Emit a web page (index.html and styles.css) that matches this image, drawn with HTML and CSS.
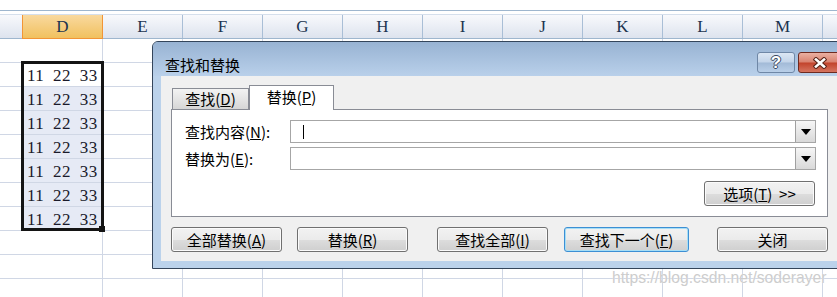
FILE: index.html
```html
<!DOCTYPE html>
<html lang="zh-CN">
<head>
    <meta charset="UTF-8">
    <title>查找和替换</title>
    <link rel="stylesheet" href="styles.css">
</head>
<body>
    <div class="sheet">
        <!-- Край строки формул -->
        <div class="formula-edge"></div>

        <!-- Заголовки столбцов -->
        <div class="colhead">
            <div class="hc corner"></div>
            <div class="hc current">D</div>
            <div class="hc">E</div>
            <div class="hc">F</div>
            <div class="hc">G</div>
            <div class="hc">H</div>
            <div class="hc">I</div>
            <div class="hc">J</div>
            <div class="hc">K</div>
            <div class="hc">L</div>
            <div class="hc">M</div>
            <div class="hc"></div>
        </div>

        <!-- Сетка ячеек -->
        <div class="grid">
            <div class="col-d">
                <div class="cell"></div>
                <div class="cell">11 22 33</div>
                <div class="cell picked">11 22 33</div>
                <div class="cell picked">11 22 33</div>
                <div class="cell picked">11 22 33</div>
                <div class="cell picked">11 22 33</div>
                <div class="cell picked">11 22 33</div>
                <div class="cell picked">11 22 33</div>
            </div>
        </div>

        <div class="selection"><span class="fill-handle"></span></div>

        <!-- Диалог -->
        <div class="dialog">
            <div class="titlebar">
                <span class="title">查找和替换</span>
                <div class="caption">
                    <span class="cbtn help">?</span>
                    <span class="cbtn close">
                        <svg width="14" height="12" viewBox="0 0 14 12">
                            <path d="M3 2.5 L11 9.5 M11 2.5 L3 9.5" stroke="#5a2418" stroke-width="4.6" stroke-linecap="square" fill="none"/>
                            <path d="M3 2.5 L11 9.5 M11 2.5 L3 9.5" stroke="#ffffff" stroke-width="2.6" stroke-linecap="square" fill="none"/>
                        </svg>
                    </span>
                </div>
            </div>
            <div class="client">
                <div class="tabs">
                    <span class="tab">查找(<u>D</u>)</span>
                    <span class="tab active">替换(<u>P</u>)</span>
                </div>
                <div class="panel">
                    <div class="field">
                        <label>查找内容(<u>N</u>):</label>
                        <div class="combo"><span class="caret"></span><span class="drop"></span></div>
                    </div>
                    <div class="field">
                        <label>替换为(<u>E</u>):</label>
                        <div class="combo"><span class="drop"></span></div>
                    </div>
                    <div class="options-row">
                        <button class="btn options">选项(<u>T</u>)&nbsp;&nbsp;&gt;&gt;</button>
                    </div>
                </div>
                <div class="actions">
                    <button class="btn">全部替换(<u>A</u>)</button>
                    <button class="btn replace">替换(<u>R</u>)</button>
                    <button class="btn find-all">查找全部(<u>I</u>)</button>
                    <button class="btn find-next focus">查找下一个(<u>F</u>)</button>
                    <button class="btn close-btn">关闭</button>
                </div>
            </div>
        </div>

        <div class="watermark">https://blog.csdn.net/soderayer</div>
    </div>
</body>
</html>
```
FILE: styles.css
```css
/* Основа */
body {
    margin: 0;
    padding: 0;
    background: #fff;
    font-family: "Noto Sans CJK SC", sans-serif;
}
.sheet {
    position: relative;
    width: 837px;
    height: 297px;
    overflow: hidden;
    background: #fff;
}
.formula-edge {
    height: 11px;
    box-sizing: border-box;
    border-bottom: 1px solid #9eb6ce;
    margin-bottom: 3px;
}

/* Заголовки столбцов */
.colhead {
    display: flex;
    height: 25px;
    box-sizing: border-box;
    border-top: 1px solid #d5dfec;
    border-bottom: 1px solid #9eb6ce;
    background: linear-gradient(#f8f9fc, #dde3ee);
}
.hc {
    flex: none;
    width: 80px;
    box-sizing: border-box;
    border-right: 1px solid #a9bed6;
    text-align: center;
    font-family: "Liberation Serif", "DejaVu Serif", serif;
    font-size: 17px;
    line-height: 23px;
    color: #1c3450;
}
.hc.corner {
    width: 23px;
    border-right: none;
}
.hc.current {
    background: linear-gradient(#f9d99f, #f1c15f);
    border-left: 1px solid #f29536;
    border-right: 1px solid #f29536;
    box-shadow: 0 1px 0 #f29536;
    width: 81px;
    margin-left: -1px;
}

/* Сетка */
.grid {
    height: 258px;
    background-image:
        repeating-linear-gradient(to right, transparent 0 79px, #d0d7e5 79px 80px),
        repeating-linear-gradient(to bottom, transparent 0 23px, #d0d7e5 23px 24px);
    background-position: 23px 0, 0 0;
}
.col-d {
    margin-left: 23px;
    width: 79px;
}
.cell {
    height: 23px;
    margin-bottom: 1px;
    background: #fff;
    padding-left: 4px;
    font-family: "Liberation Serif", "DejaVu Serif", serif;
    font-size: 17px;
    letter-spacing: 0.5px;
    word-spacing: 4px;
    line-height: 25px;
    color: #1a1a2a;
    box-sizing: border-box;
}
.cell.picked {
    background: #e6eaf5;
}
.selection {
    position: absolute;
    left: 21px;
    top: 61px;
    width: 83px;
    height: 170px;
    box-sizing: border-box;
    border: 3px solid #141414;
}
.fill-handle {
    position: absolute;
    right: -4px;
    bottom: -4px;
    width: 6px;
    height: 6px;
    background: #141414;
}

/* Окно диалога */
.dialog {
    position: absolute;
    left: 152px;
    top: 41px;
    width: 695px;
    height: 228px;
    box-sizing: border-box;
    border: 1px solid #34455b;
    border-radius: 6px 6px 0 0;
    background: #bbd2eb;
    display: flex;
    flex-direction: column;
}
.titlebar {
    height: 34px;
    flex: none;
    display: flex;
    align-items: flex-start;
    padding: 0 4px 0 12px;
    border-radius: 5px 5px 0 0;
    background: linear-gradient(#98b3d3, #b9d0ea);
}
.title {
    flex: 1;
    margin-top: 14px;
    font-size: 15px;
    line-height: 17px;
    color: #000;
}
.caption {
    display: flex;
    gap: 3px;
    margin-top: 10px;
}
.cbtn {
    height: 21px;
    box-sizing: border-box;
    border-radius: 3px;
    display: flex;
    align-items: center;
    justify-content: center;
}
.help {
    width: 38px;
    border: 1px solid #6f87a6;
    background: linear-gradient(#dce7f4 0%, #c3d4e9 48%, #a2bad7 52%, #b9cfe8 100%);
    font-family: "Liberation Sans", sans-serif;
    font-weight: bold;
    font-size: 17px;
    color: #fff;
    text-shadow: 1px 0 0 #3a4a60, -1px 0 0 #3a4a60, 0 1px 0 #3a4a60, 0 -1px 0 #3a4a60;
}
.close {
    width: 44px;
    border: 1px solid #6e2a20;
    background: linear-gradient(#eab0a2 0%, #d9826f 48%, #c2432b 52%, #d57560 100%);
}
.client {
    flex: none;
    height: 185px;
    margin: 0 8px;
    padding: 9px 10px;
    box-sizing: border-box;
    background: #f0f0f0;
}

/* Вкладки */
.tabs {
    display: flex;
    align-items: flex-end;
    height: 24px;
    padding-left: 1px;
}
.tab {
    box-sizing: border-box;
    width: 77px;
    height: 21px;
    border: 1px solid #898c95;
    border-bottom: none;
    background: linear-gradient(#f3f3f3, #d6d6d6);
    text-align: center;
    font-size: 15px;
    line-height: 19px;
}
.tab.active {
    width: 85px;
    height: 25px;
    margin-bottom: -1px;
    background: #fff;
    position: relative;
    z-index: 1;
    line-height: 22px;
}
.panel {
    height: 108px;
    box-sizing: border-box;
    border: 1px solid #898c95;
    background: #fff;
    padding: 10px 11px 0 13px;
}
.field {
    display: flex;
    align-items: center;
    height: 23px;
}
.field + .field {
    margin-top: 4px;
}
.field label {
    width: 105px;
    font-size: 15px;
    line-height: 18px;
}
.combo {
    flex: 1;
    height: 23px;
    box-sizing: border-box;
    border: 1px solid #a6a6a6;
    display: flex;
    align-items: center;
}
.caret {
    width: 1px;
    height: 14px;
    margin-left: 12px;
    background: #000;
}
.drop {
    margin-left: auto;
    width: 20px;
    height: 21px;
    box-sizing: border-box;
    border-left: 1px solid #a0a0a0;
    background: linear-gradient(#f6f6f6, #d9d9d9);
    display: flex;
    align-items: center;
    justify-content: center;
}
.drop::after {
    content: "";
    border-left: 5px solid transparent;
    border-right: 5px solid transparent;
    border-top: 6px solid #000;
}
.options-row {
    display: flex;
    justify-content: flex-end;
    margin-top: 11px;
    padding-right: 1px;
}

/* Кнопки */
.btn {
    flex: none;
    width: 111px;
    height: 25px;
    box-sizing: border-box;
    padding: 0;
    border: 1px solid #707070;
    border-radius: 3px;
    background: linear-gradient(#f2f2f2 0%, #ebebeb 50%, #dddddd 51%, #cfcfcf 100%);
    box-shadow: inset 0 0 0 1px #fbfbfb;
    font-family: "Noto Sans CJK SC", sans-serif;
    font-size: 15px;
    line-height: 21px;
    color: #000;
}
.actions {
    display: flex;
    margin-top: 10px;
}
.btn.replace {
    margin-left: 15px;
}
.btn.find-all {
    margin-left: 29px;
}
.btn.find-next {
    margin-left: 16px;
    width: 125px;
}
.btn.close-btn {
    margin-left: 28px;
}
.btn.focus {
    border-color: #3c8fd4;
    box-shadow: inset 0 0 0 1px #a6def6;
}

.watermark {
    position: absolute;
    left: 612px;
    top: 269px;
    font-family: "Liberation Sans", sans-serif;
    font-size: 15.7px;
    line-height: 18px;
    color: #cdcdcd;
    text-shadow: 0 0 1px #fff;
}
```
